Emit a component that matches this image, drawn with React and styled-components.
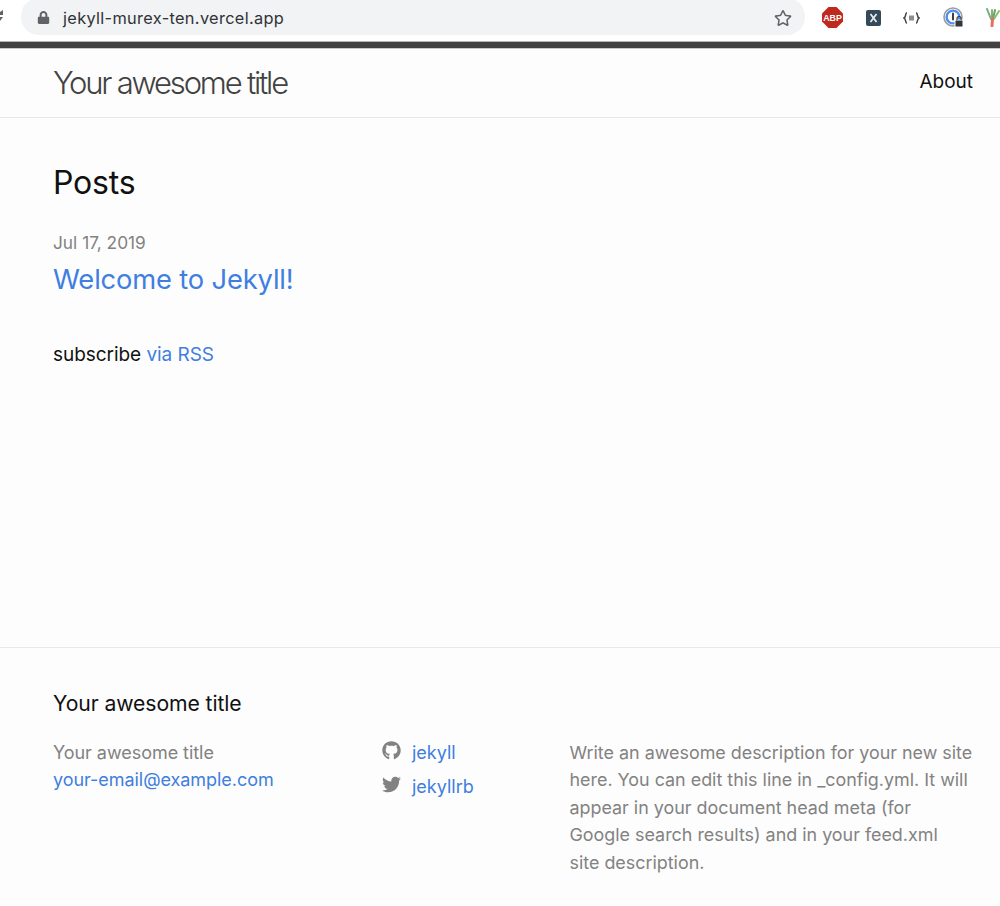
import React from "react";
import styled, { createGlobalStyle } from "styled-components";
import { FaGithub, FaTwitter, FaLock, FaRegStar } from "react-icons/fa";

const Global = createGlobalStyle`
  html, body { margin: 0; padding: 0; background: #fdfdfd; }
  body { font-family: Inter, "Liberation Sans", sans-serif; color: #111; overflow: hidden; }
  a { text-decoration: none; color: #3f7fe0; }
`;
const Page = styled.div`width: 1000px; height: 906px; display: flex; flex-direction: column; overflow: hidden;`;
const Chrome = styled.div`height: 41px; flex: none; background: #fff; display: flex; align-items: flex-start; overflow: hidden;`;
const ReloadSliver = styled.svg`display: block; flex: none; margin: 10px 18px 0 0;`;
const UrlPill = styled.div`width: 786px; height: 37px; margin-top: -2px; background: #f1f3f4; border-radius: 18px; display: flex; align-items: center; padding: 2px 13px 0 16px; box-sizing: border-box; color: #5f6368;`;
const Url = styled.span`margin-left: 13px; font-size: 16.35px; color: #303236; flex: 1; letter-spacing: 0.02em; white-space: nowrap;`;
const Extensions = styled.div`display: flex; align-items: center; height: 35px; margin-left: 17px; gap: 22.5px;`;
const ExtIcon = styled.svg`display: block; flex: none;`;
const ChromeRule = styled.div`height: 6px; flex: none; background: #414141; border-top: 1px solid #b4b4b4; border-bottom: 1px solid #c8c8c8;`;
const Header = styled.header`height: 69px; flex: none; box-sizing: border-box; border-bottom: 1px solid #e8e8e8; padding: 0 27px 0 53px; display: flex; justify-content: space-between; align-items: center;`;
const SiteTitle = styled.a`color: #424242; font-size: 31px; font-weight: 300; letter-spacing: -2.2px; white-space: nowrap; margin-top: -2px;`;
const NavLink = styled.a`color: #111; font-size: 19px; font-weight: 400; margin-top: -4px;`;
const Main = styled.main`height: 529px; flex: none; box-sizing: border-box; padding: 43px 53px 0;`;
const Heading = styled.h1`margin: 0; font-size: 32px; line-height: 44px; font-weight: 400; letter-spacing: -0.2px; color: #111;`;
const Meta = styled.div`margin-top: 27px; font-size: 17.3px; line-height: 22px; color: #828282;`;
const PostLink = styled.a`display: block; margin-top: 8px; font-size: 27.3px; line-height: 36px; letter-spacing: -0.15px;`;
const Subscribe = styled.p`margin: 45px 0 0; font-size: 19px; line-height: 24px; letter-spacing: -0.05px; color: #111;`;
const Footer = styled.footer`flex: 1; border-top: 1px solid #e8e8e8; padding: 41px 27px 0 53px;`;
const FooterTitle = styled.h2`margin: 0; font-size: 21.2px; font-weight: 400; line-height: 28px; letter-spacing: -0.1px; color: #111;`;
const Columns = styled.div`display: grid; grid-template-columns: 329px 187.5px 403px; margin-top: 22px; font-size: 18px; line-height: 27.4px; color: #828282;`;
const Plain = styled.div`white-space: nowrap; letter-spacing: -0.05px;`;
const SocialList = styled.div`display: flex; flex-direction: column; gap: 7px;`;
const SocialRow = styled.a`display: flex; align-items: center; gap: 11px; color: #3f7fe0; svg { color: #828282; flex: none; margin-top: -5px; }`;
const Description = styled.p`margin: 0; font-size: 17.9px; letter-spacing: 0; white-space: nowrap;`;

const Adblock = () => (
  <ExtIcon width="21" height="21" viewBox="0 0 21 21">
    <polygon points="6.5,0 14.5,0 21,6.5 21,14.5 14.5,21 6.5,21 0,14.5 0,6.5" fill="#c0291e" />
    <text x="10.5" y="13.8" textAnchor="middle" fontSize="8.8" fontWeight="700" fontFamily="Liberation Sans, sans-serif" fill="#fff">ABP</text>
  </ExtIcon>
);
const XBox = () => (
  <ExtIcon width="15" height="16" viewBox="0 0 15 16">
    <rect width="15" height="16" rx="2" fill="#34495a" />
    <path d="M4.5 4L10.5 12M10.5 4L4.5 12" stroke="#e6eaec" strokeWidth="1.8" />
  </ExtIcon>
);
const Braces = () => (
  <ExtIcon width="17" height="12" viewBox="0 0 17 12" fill="none">
    <path d="M4 .8C1.8.8 3.4 5.2 1 6C3.4 6.8 1.8 11.2 4 11.2M13 .8C15.2.8 13.6 5.2 16 6C13.6 6.8 15.2 11.2 13 11.2" stroke="#3e4347" strokeWidth="1.5" />
    <rect x="6" y="3.5" width="5" height="5" fill="#8b8f92" />
  </ExtIcon>
);
const OnePassword = () => (
  <ExtIcon width="21" height="21" viewBox="0 0 21 21" fill="none">
    <circle cx="10" cy="10" r="9" stroke="#9a9ea3" strokeWidth="1.6" />
    <circle cx="10" cy="10" r="6.4" stroke="#4c8ff0" strokeWidth="2.4" />
    <rect x="9" y="5.5" width="2" height="8" rx="1" fill="#3b3f44" />
    <rect x="12" y="13" width="8" height="7" rx="1.2" fill="#33373b" stroke="#fff" />
    <path d="M14 13V11.5A2 2 0 0 1 18 11.5V13" stroke="#33373b" strokeWidth="1.2" />
  </ExtIcon>
);
const Leek = () => (
  <ExtIcon width="14" height="19" viewBox="0 0 14 19" fill="none" strokeWidth="2" strokeLinecap="round">
    <path d="M5 11L1 1" stroke="#6fb08a" />
    <path d="M6 10L6 2" stroke="#9aa86a" />
    <path d="M7 11L9 2" stroke="#5fa56e" />
    <path d="M8 11L13 3" stroke="#8cc06b" />
    <path d="M6.5 11L6 18" stroke="#e2725b" strokeWidth="3" />
  </ExtIcon>
);

export default function App() {
  return (
    <Page>
      <Global />
      <Chrome>
        <ReloadSliver width="3" height="12" viewBox="0 0 3 12" fill="none">
          <path d="M0 2L3 0V5H0M0 7H3L0 11" fill="#5f6368" />
        </ReloadSliver>
        <UrlPill>
          <FaLock size={13} />
          <Url>jekyll-murex-ten.vercel.app</Url>
          <FaRegStar size={18} />
        </UrlPill>
        <Extensions>
          <Adblock />
          <XBox />
          <Braces />
          <OnePassword />
          <Leek />
        </Extensions>
      </Chrome>
      <ChromeRule />
      <Header>
        <SiteTitle href="#">Your awesome title</SiteTitle>
        <NavLink href="#">About</NavLink>
      </Header>
      <Main>
        <Heading>Posts</Heading>
        <Meta>Jul 17, 2019</Meta>
        <PostLink href="#">Welcome to Jekyll!</PostLink>
        <Subscribe>subscribe <a href="#">via RSS</a></Subscribe>
      </Main>
      <Footer>
        <FooterTitle>Your awesome title</FooterTitle>
        <Columns>
          <Plain>
            Your awesome title<br />
            <a href="#">your-email@example.com</a>
          </Plain>
          <SocialList>
            <SocialRow href="#"><FaGithub size={19} />jekyll</SocialRow>
            <SocialRow href="#"><FaTwitter size={19} />jekyllrb</SocialRow>
          </SocialList>
          <Description>
            Write an awesome description for your new site<br />
            here. You can edit this line in _config.yml. It will<br />
            appear in your document head meta (for<br />
            Google search results) and in your feed.xml<br />
            site description.
          </Description>
        </Columns>
      </Footer>
    </Page>
  );
}
